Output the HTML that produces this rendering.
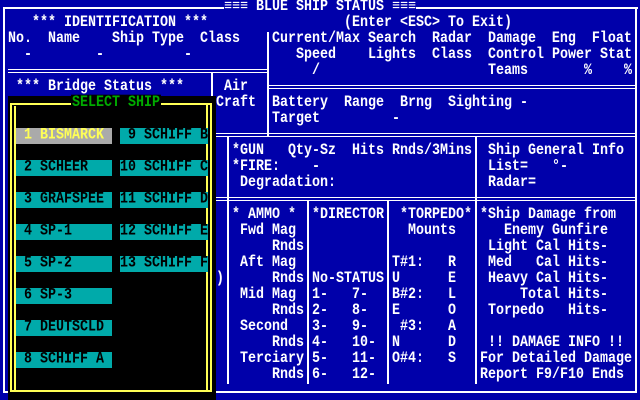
<!DOCTYPE html>
<html><head><meta charset="utf-8"><style>
*{margin:0;padding:0}
body{width:640px;height:400px;background:#0000AA;position:relative;overflow:hidden;font-family:"Liberation Mono","DejaVu Sans Mono",monospace;font-size:13.33px;font-weight:bold;color:#fff}
.t{position:absolute;white-space:pre;line-height:16px;height:16px;transform:scaleY(1.15);transform-origin:50% 55%}
.h{position:absolute;height:2px;background:#fff}
.v{position:absolute;width:2px;background:#fff}
#ov{position:absolute;left:8px;top:96px;width:208px;height:304px;background:#000;z-index:5}
.y{position:absolute;background:#FFFF55}
.b{position:absolute;height:16px;background:#00AAAA;color:#000;line-height:16px;white-space:pre}
.b span{display:inline-block;transform:scaleY(1.15)}
</style></head><body>
<div class="h" style="left:4px;top:7px;width:220px"></div>
<div class="h" style="left:416px;top:7px;width:222px"></div>
<div class="v" style="left:3px;top:7px;height:386px"></div>
<div class="v" style="left:635px;top:7px;height:386px"></div>
<div class="h" style="left:3px;top:391px;width:634px"></div>
<div class="h" style="left:8px;top:69px;width:261px;height:1px"></div>
<div class="h" style="left:8px;top:72px;width:261px;height:1px"></div>
<div class="h" style="left:268px;top:85px;width:368px;height:1px"></div>
<div class="h" style="left:268px;top:88px;width:368px;height:1px"></div>
<div class="h" style="left:212px;top:133px;width:424px;height:1px"></div>
<div class="h" style="left:212px;top:136px;width:424px;height:1px"></div>
<div class="h" style="left:212px;top:197px;width:424px;height:1px"></div>
<div class="h" style="left:212px;top:200px;width:424px;height:1px"></div>
<div class="v" style="left:267px;top:32px;height:104px"></div>
<div class="v" style="left:211px;top:72px;height:64px"></div>
<div class="v" style="left:227px;top:136px;height:248px"></div>
<div class="v" style="left:475px;top:136px;height:248px"></div>
<div class="v" style="left:307px;top:200px;height:184px"></div>
<div class="v" style="left:387px;top:200px;height:184px"></div>

<div class="t" style="left:224px;top:0">≡≡≡ BLUE SHIP STATUS ≡≡≡</div>
<div class="t" style="left:32px;top:16px">*** IDENTIFICATION ***</div>
<div class="t" style="left:344px;top:16px">(Enter &lt;ESC&gt; To Exit)</div>
<div class="t" style="left:8px;top:32px">No.  Name    Ship Type  Class</div>
<div class="t" style="left:272px;top:32px">Current/Max Search  Radar  Damage  Eng  Float</div>
<div class="t" style="left:24px;top:48px">-</div>
<div class="t" style="left:96px;top:48px">-</div>
<div class="t" style="left:184px;top:48px">-</div>
<div class="t" style="left:296px;top:48px">Speed</div>
<div class="t" style="left:368px;top:48px">Lights  Class  Control Power Stat</div>
<div class="t" style="left:312px;top:64px">/</div>
<div class="t" style="left:488px;top:64px">Teams</div>
<div class="t" style="left:584px;top:64px">%</div>
<div class="t" style="left:624px;top:64px">%</div>
<div class="t" style="left:16px;top:80px">*** Bridge Status ***</div>
<div class="t" style="left:224px;top:80px">Air</div>
<div class="t" style="left:216px;top:96px">Craft</div>
<div class="t" style="left:272px;top:96px">Battery  Range  Brng  Sighting -</div>
<div class="t" style="left:272px;top:112px">Target</div>
<div class="t" style="left:392px;top:112px">-</div>
<div class="t" style="left:232px;top:144px">*GUN   Qty-Sz  Hits Rnds/3Mins</div>
<div class="t" style="left:488px;top:144px">Ship General Info</div>
<div class="t" style="left:232px;top:160px">*FIRE:</div>
<div class="t" style="left:312px;top:160px">-</div>
<div class="t" style="left:488px;top:160px">List=   °-</div>
<div class="t" style="left:240px;top:176px">Degradation:</div>
<div class="t" style="left:488px;top:176px">Radar=</div>
<div class="t" style="left:232px;top:208px">* AMMO *</div>
<div class="t" style="left:312px;top:208px">*DIRECTOR</div>
<div class="t" style="left:400px;top:208px">*TORPEDO*</div>
<div class="t" style="left:480px;top:208px">*Ship Damage from</div>
<div class="t" style="left:240px;top:224px">Fwd Mag</div>
<div class="t" style="left:408px;top:224px">Mounts</div>
<div class="t" style="left:504px;top:224px">Enemy Gunfire</div>
<div class="t" style="left:272px;top:240px">Rnds</div>
<div class="t" style="left:488px;top:240px">Light Cal Hits-</div>
<div class="t" style="left:240px;top:256px">Aft Mag</div>
<div class="t" style="left:392px;top:256px">T#1:</div>
<div class="t" style="left:448px;top:256px">R</div>
<div class="t" style="left:488px;top:256px">Med   Cal Hits-</div>
<div class="t" style="left:216px;top:272px">)</div>
<div class="t" style="left:272px;top:272px">Rnds</div>
<div class="t" style="left:312px;top:272px">No-STATUS</div>
<div class="t" style="left:392px;top:272px">U</div>
<div class="t" style="left:448px;top:272px">E</div>
<div class="t" style="left:488px;top:272px">Heavy Cal Hits-</div>
<div class="t" style="left:240px;top:288px">Mid Mag</div>
<div class="t" style="left:312px;top:288px">1-   7-</div>
<div class="t" style="left:392px;top:288px">B#2:</div>
<div class="t" style="left:448px;top:288px">L</div>
<div class="t" style="left:520px;top:288px">Total Hits-</div>
<div class="t" style="left:272px;top:304px">Rnds</div>
<div class="t" style="left:312px;top:304px">2-   8-</div>
<div class="t" style="left:392px;top:304px">E</div>
<div class="t" style="left:448px;top:304px">O</div>
<div class="t" style="left:488px;top:304px">Torpedo   Hits-</div>
<div class="t" style="left:240px;top:320px">Second</div>
<div class="t" style="left:312px;top:320px">3-   9-</div>
<div class="t" style="left:400px;top:320px">#3:</div>
<div class="t" style="left:448px;top:320px">A</div>
<div class="t" style="left:272px;top:336px">Rnds</div>
<div class="t" style="left:312px;top:336px">4-   10-</div>
<div class="t" style="left:392px;top:336px">N</div>
<div class="t" style="left:448px;top:336px">D</div>
<div class="t" style="left:488px;top:336px">!! DAMAGE INFO !!</div>
<div class="t" style="left:240px;top:352px">Terciary</div>
<div class="t" style="left:312px;top:352px">5-   11-</div>
<div class="t" style="left:392px;top:352px">O#4:</div>
<div class="t" style="left:448px;top:352px">S</div>
<div class="t" style="left:480px;top:352px">For Detailed Damage</div>
<div class="t" style="left:272px;top:368px">Rnds</div>
<div class="t" style="left:312px;top:368px">6-   12-</div>
<div class="t" style="left:480px;top:368px">Report F9/F10 Ends</div>

<div id="ov">
  <div class="y" style="left:2px;top:7px;width:202px;height:2px"></div>
  <div class="y" style="left:2px;top:7px;width:2px;height:289px"></div>
  <div class="y" style="left:198px;top:7px;width:2px;height:289px"></div>
  <div class="y" style="left:6px;top:10px;width:2px;height:286px"></div>
  <div class="y" style="left:202px;top:7px;width:2px;height:289px"></div>
  <div class="y" style="left:2px;top:294px;width:202px;height:2px"></div>
  <div class="t" style="left:63px;top:0;background:#000;color:#00AA00;padding:0 1px">SELECT SHIP</div>
  <div class="b" style="left:8px;top:32px;width:96px;background:#AAAAAA;color:#FFFF55"><span> 1 BISMARCK</span></div>
  <div class="b" style="left:112px;top:32px;width:88px"><span> 9 SCHIFF B</span></div>
  <div class="b" style="left:8px;top:64px;width:96px"><span> 2 SCHEER</span></div>
  <div class="b" style="left:112px;top:64px;width:88px"><span>10 SCHIFF C</span></div>
  <div class="b" style="left:8px;top:96px;width:96px"><span> 3 GRAFSPEE</span></div>
  <div class="b" style="left:112px;top:96px;width:88px"><span>11 SCHIFF D</span></div>
  <div class="b" style="left:8px;top:128px;width:96px"><span> 4 SP-1</span></div>
  <div class="b" style="left:112px;top:128px;width:88px"><span>12 SCHIFF E</span></div>
  <div class="b" style="left:8px;top:160px;width:96px"><span> 5 SP-2</span></div>
  <div class="b" style="left:112px;top:160px;width:88px"><span>13 SCHIFF F</span></div>
  <div class="b" style="left:8px;top:192px;width:96px"><span> 6 SP-3</span></div>
  <div class="b" style="left:8px;top:224px;width:96px"><span> 7 DEUTSCLD</span></div>
  <div class="b" style="left:8px;top:256px;width:96px"><span> 8 SCHIFF A</span></div>
</div>
</body></html>
